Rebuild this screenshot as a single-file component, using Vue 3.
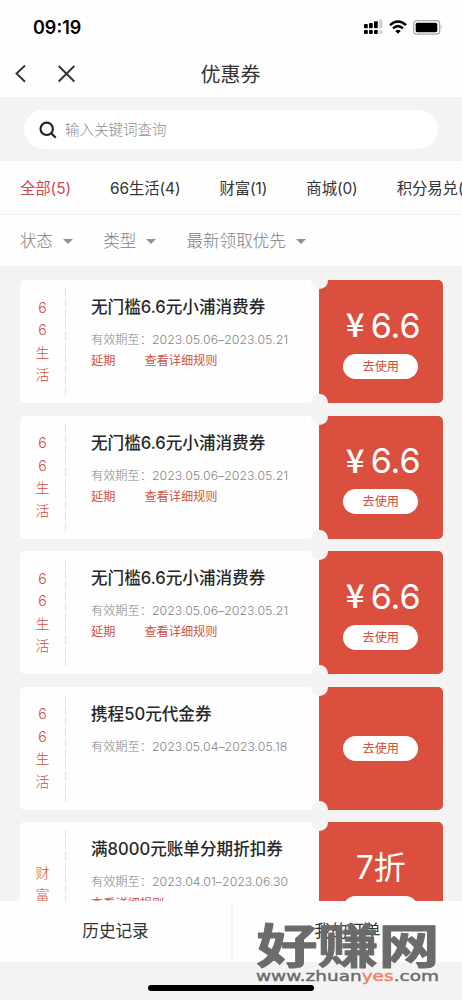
<script setup>
const tabs = ['全部(5)', '66生活(4)', '财富(1)', '商城(0)', '积分易兑(0)']
const filters = ['状态', '类型', '最新领取优先']
const life = ['6', '6', '生', '活']
const coupons = [
  { tag: life, title: '无门槛6.6元小浦消费券', date: '2023.05.06–2023.05.21', links: ['延期', '查看详细规则'], money: '6.6' },
  { tag: life, title: '无门槛6.6元小浦消费券', date: '2023.05.06–2023.05.21', links: ['延期', '查看详细规则'], money: '6.6' },
  { tag: life, title: '无门槛6.6元小浦消费券', date: '2023.05.06–2023.05.21', links: ['延期', '查看详细规则'], money: '6.6' },
  { tag: life, title: '携程50元代金券', date: '2023.05.04–2023.05.18', links: [] },
  { tag: ['财', '富'], title: '满8000元账单分期折扣券', date: '2023.04.01–2023.06.30', links: ['查看详细规则'], discount: '7折' },
]
</script>

<template>
  <div class="page">
    <header class="status">
      <span class="time">09:19</span>
      <svg class="sys" width="80" height="18" viewBox="0 0 80 18">
        <g fill="#000">
          <rect x="1" y="6" width="3.8" height="4.2" rx="1" /><rect x="6" y="5" width="3.8" height="5.2" rx="1" /><rect x="11" y="3.2" width="3.8" height="7" rx="1" />
          <rect x="1" y="12" width="3.8" height="4" rx="1" /><rect x="6" y="12" width="3.8" height="4" rx="1" /><rect x="11" y="12" width="3.8" height="4" rx="1" />
        </g>
        <g fill="#cfcfcf"><rect x="16.3" y="1.5" width="3" height="8.7" rx="1" /><rect x="16.3" y="12.2" width="3" height="3.8" rx="1" /></g>
        <g fill="none" stroke="#000" stroke-width="2.5">
          <path d="M27 7.2Q35 -0.2 43 7.2" /><path d="M30 10.4Q35 5.8 40 10.4" />
        </g>
        <path d="M32.3 12.9Q35 10.8 37.7 12.9L35 15.8Z" fill="#000" />
        <rect x="50.7" y="2.7" width="26" height="13.4" rx="3.3" fill="#fff" stroke="#aaa" stroke-width="1.3" />
        <rect x="52.7" y="4.7" width="21.6" height="9.5" rx="1.6" fill="#000" />
        <path d="M78.3 7.3Q80 9.4 78.3 11.5Z" fill="#999" />
      </svg>
    </header>
    <nav class="nav">
      <svg class="nav-icons" width="64" height="22" viewBox="0 0 64 22" fill="none" stroke="#333439" stroke-width="1.9">
        <path d="M12 2.5L3.5 10.5L12 18.7" /><path d="M45.7 3L61.3 18.5M61.3 3L45.7 18.5" />
      </svg>
      <h1>优惠券</h1>
    </nav>
    <section class="search">
      <div class="pill">
        <svg width="18" height="18" viewBox="0 0 18 18" fill="none" stroke="#242424" stroke-width="2.2">
          <circle cx="7.7" cy="7.8" r="6.2" /><path d="M12.2 12.3L16.7 16.8" />
        </svg>
        <span>输入关键词查询</span>
      </div>
    </section>
    <div class="tabs">
      <span v-for="(t, i) in tabs" :key="t" :class="{ active: i === 0 }">{{ t }}</span>
    </div>
    <div class="filters">
      <span v-for="f in filters" :key="f">{{ f }}<i></i></span>
    </div>
    <main class="list">
      <article v-for="(c, i) in coupons" :key="i" class="card">
        <div class="tag"><span v-for="(ch, k) in c.tag" :key="k">{{ ch }}</span></div>
        <div class="info">
          <h2>{{ c.title }}</h2>
          <p class="date"><span>有效期至：</span><span class="num">{{ c.date }}</span></p>
          <p class="links"><a v-for="l in c.links" :key="l">{{ l }}</a></p>
        </div>
        <div class="price">
          <div v-if="c.money" class="amount"><b>¥</b><span>{{ c.money }}</span></div>
          <div v-if="c.discount" class="amount rate">{{ c.discount }}</div>
          <button>去使用</button>
        </div>
        <i class="notch top"></i>
        <i class="notch bottom"></i>
      </article>
    </main>
    <footer class="bar">
      <span>历史记录</span>
      <span>我的订单</span>
    </footer>
    <div class="home"><i></i></div>
    <svg class="mark" width="192" height="74" viewBox="0 0 192 74">
      <text class="mark-name" transform="translate(4.5 45.5) scale(1.22 .93)" textLength="150" lengthAdjust="spacingAndGlyphs">好赚网</text>
      <text class="mark-url" transform="translate(4 64)" textLength="183" lengthAdjust="spacingAndGlyphs">www.zhuan<tspan class="accent">yes</tspan>.com</text>
    </svg>
  </div>
</template>

<style>
body { overflow: hidden; }
</style>

<style scoped>
* { box-sizing: border-box; }
.page {
  position: relative;
  width: 462px;
  height: 1000px;
  overflow: hidden;
  display: flex;
  flex-direction: column;
  background: #f3f3f3;
  color: #333;
  font-family: Inter, "Noto Sans CJK SC", sans-serif;
}
h1, h2, p { margin: 0; }
.status {
  flex: none;
  height: 50px;
  padding: 18px 18px 0 33px;
  display: flex;
  justify-content: space-between;
  background: #fefefe;
}
.time { font-size: 18px; line-height: 20px; font-weight: 600; color: #000; letter-spacing: 0; }
.sys { margin-right: 1px; }
.nav {
  flex: none;
  height: 47px;
  display: grid;
  grid-template-columns: 80px 1fr 80px;
  align-items: center;
  background: #fefefe;
}
.nav-icons { margin-left: 13px; }
h1 { font-size: 20px; line-height: 44px; font-weight: 400; text-align: center; padding: 3px 1px 0 0; }
.search { flex: none; height: 64px; padding: 13px 24px 12px; }
.pill {
  height: 39px;
  border-radius: 20px;
  background: #fff;
  display: flex;
  align-items: center;
  gap: 8px;
  padding-left: 15px;
  font-size: 14.5px;
  font-weight: 300;
  color: #8c8c8c;
}
.pill span { margin-top: -2px; }
.tabs {
  flex: none;
  height: 54px;
  padding: 0 0 2px 20px;
  display: flex;
  align-items: center;
  gap: 39px;
  background: #fefefe;
  border-bottom: 1px solid #f1f1f1;
  font-size: 15.4px;
  white-space: nowrap;
  letter-spacing: -.08px;
}
.active { color: #cc4653; }
.filters {
  flex: none;
  height: 51px;
  padding: 0 0 1px 20px;
  display: flex;
  align-items: center;
  gap: 30px;
  background: #fefefe;
  font-size: 16.6px;
  font-weight: 300;
  color: #808080;
}
.filters span { display: flex; align-items: center; }
.filters i { margin: 2px 0 0 10px; border: 5px solid transparent; border-top-color: #929292; border-bottom: 0; }
.list {
  flex: none;
  height: 635px;
  overflow: hidden;
  padding: 14px 19.5px 0;
  display: flex;
  flex-direction: column;
  gap: 12.3px;
}
.card {
  position: relative;
  flex: none;
  height: 123.3px;
  display: flex;
  border-radius: 5px;
  background: #fefefe;
}
.tag {
  width: 46px;
  margin: 8px 0;
  display: flex;
  flex-direction: column;
  align-items: center;
  justify-content: center;
  color: #cf5045;
  font-size: 14px;
  font-weight: 300;
  line-height: 22.5px;
  background: repeating-linear-gradient(#dedede 0 8px, transparent 8px 11px) right / 1px 100% no-repeat;
}
.info { width: 253.5px; padding: 15px 0 0 25.5px; white-space: nowrap; }
h2 { font-size: 16.6px; line-height: 25px; font-weight: 500; color: #282828; }
.date { display: flex; margin-top: 10px; font-size: 12.2px; line-height: 20px; font-weight: 300; color: #858585; }
.num { font-size: 12.3px; letter-spacing: .04px; }
.links { display: flex; gap: 29px; font-size: 12.2px; line-height: 20px; color: #cd5448; margin-top: 1.2px; }
.price {
  flex: 1;
  display: flex;
  flex-direction: column;
  align-items: center;
  justify-content: center;
  border-radius: 0 5px 5px 0;
  background: #da4f3e;
  color: #fff;
}
.amount { display: flex; align-items: center; gap: 6px; font-size: 34px; line-height: 42px; height: 49px; padding: 0 0 7px 5px; }
.amount b { font: 500 33px/42px "Noto Sans CJK SC", sans-serif; margin-top: -5px; }
.rate { font-size: 32px; padding-left: 0; }
button {
  width: 75px;
  height: 25px;
  padding: 0;
  border: 0;
  border-radius: 13px;
  background: #fff;
  color: #cf4d40;
  font: 400 12.2px/25px Inter, "Noto Sans CJK SC", sans-serif;
}
.notch { position: absolute; left: 291.5px; width: 17px; height: 17px; border-radius: 50%; background: #f3f3f3; }
.top { top: -8px; }
.bottom { bottom: -8px; }
.bar {
  flex: none;
  height: 61px;
  display: grid;
  grid-template-columns: 1fr 1fr;
  background: #fefefe;
  font-size: 16.6px;
  line-height: 61px;
  text-align: center;
}
.bar span + span { border-left: 2px solid #f3f3f3; }
.home { flex: none; height: 38px; padding-top: 23px; }
.home i { display: block; width: 166px; height: 6px; margin: 0 auto; border-radius: 3px; background: #000; }
.mark { position: absolute; left: 252px; top: 917px; }
.mark-name { font: 700 50px "Noto Sans CJK SC", sans-serif; fill: #6b6b6b; stroke: #6b6b6b; stroke-width: 1px; stroke-linejoin: round; }
.mark-url { font: 400 14.5px "DejaVu Sans", sans-serif; fill: #6b6b6b; stroke: #6b6b6b; stroke-width: .4px; }
.accent { fill: #ee8064; stroke: #ee8064; }
</style>
